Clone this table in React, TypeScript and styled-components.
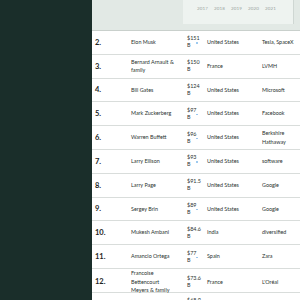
import React from 'react';
import styled, { createGlobalStyle } from 'styled-components';

const GlobalStyle = createGlobalStyle`
  html, body {
    margin: 0;
    padding: 0;
    background: #ffffff;
    overflow: hidden;
  }
  body {
    font-family: Lato, "Noto Sans", sans-serif;
    color: #1f2a27;
  }
`;

const Page = styled.div`
  display: flex;
  width: 300px;
  height: 300px;
  overflow: hidden;
`;

const Sidebar = styled.aside`
  flex: 0 0 92px;
  background-color: #1a2e2a;
`;

const Main = styled.main`
  flex: 1;
  min-width: 0;
  overflow: hidden;
`;

const HeaderBand = styled.div`
  box-sizing: border-box;
  display: flex;
  height: 31px;
  padding-left: 91px;
  background-color: #e2e9e5;
  border-bottom: 1px solid #c9d0cc;
`;

const ChartPanel = styled.div`
  box-sizing: border-box;
  display: flex;
  align-items: flex-start;
  gap: 5px;
  flex: 0 0 111px;
  height: 24px;
  padding: 6px 0 0 14px;
  background-color: #eef3f0;
  border-right: 1px solid #cfd7d3;
`;

const Year = styled.span`
  width: 12px;
  font-size: 4.5px;
  color: #9aa39f;
  letter-spacing: 0.1px;
`;

const Row = styled.div`
  box-sizing: border-box;
  display: grid;
  grid-template-columns: 39px 56px 20px 55px 46px;
  align-items: center;
  height: 23.8px;
  border-bottom: 1px solid #d9dddb;
`;

const Rank = styled.div`
  padding-left: 3px;
  font-size: 7.5px;
  font-weight: 700;
  color: #1c2522;
`;

const Cell = styled.div<{ $width?: number }>`
  position: relative;
  width: ${(p) => (p.$width ? `${p.$width}px` : 'auto')};
  font-size: 5.4px;
  line-height: 8.6px;
  color: #2a3330;
`;

const Price = styled(Cell)`
  line-height: 7px;
`;

const Dot = styled.span`
  position: absolute;
  left: 9px;
  top: 7px;
  width: 1.5px;
  height: 1.5px;
  border-radius: 50%;
  background-color: #8cc0ec;
`;

type Person = {
  rank: number;
  name: string;
  worth: string;
  country: string;
  source: string;
  dot?: boolean;
};

const people: Person[] = [
  { rank: 2, name: 'Elon Musk', worth: '$151', country: 'United States', source: 'Tesla, SpaceX', dot: true },
  { rank: 3, name: 'Bernard Arnault & family', worth: '$150', country: 'France', source: 'LVMH' },
  { rank: 4, name: 'Bill Gates', worth: '$124', country: 'United States', source: 'Microsoft' },
  { rank: 5, name: 'Mark Zuckerberg', worth: '$97', country: 'United States', source: 'Facebook', dot: true },
  { rank: 6, name: 'Warren Buffett', worth: '$96', country: 'United States', source: 'Berkshire Hathaway', dot: true },
  { rank: 7, name: 'Larry Ellison', worth: '$93', country: 'United States', source: 'software', dot: true },
  { rank: 8, name: 'Larry Page', worth: '$91.5', country: 'United States', source: 'Google' },
  { rank: 9, name: 'Sergey Brin', worth: '$89', country: 'United States', source: 'Google', dot: true },
  { rank: 10, name: 'Mukesh Ambani', worth: '$84.6', country: 'India', source: 'diversified' },
  { rank: 11, name: 'Amancio Ortega', worth: '$77', country: 'Spain', source: 'Zara', dot: true },
  { rank: 12, name: 'Francoise Bettencourt Meyers & family', worth: '$73.6', country: 'France', source: "L'Oréal" },
  { rank: 13, name: 'Zhong Shanshan', worth: '$68.9', country: 'China', source: 'beverages' },
];

const years = ['2017', '2018', '2019', '2020', '2021'];

const App: React.FC = () => {
  return (
    <>
      <GlobalStyle />
      <Page>
        <Sidebar />
        <Main>
          <HeaderBand>
            <ChartPanel>
              {years.map((y) => (
                <Year key={y}>{y}</Year>
              ))}
            </ChartPanel>
          </HeaderBand>
          {people.map((p) => (
            <Row key={p.rank}>
              <Rank>{p.rank}.</Rank>
              <Cell $width={46}>{p.name}</Cell>
              <Price $width={12}>
                {p.worth} B{p.dot && <Dot />}
              </Price>
              <Cell>{p.country}</Cell>
              <Cell $width={40}>{p.source}</Cell>
            </Row>
          ))}
        </Main>
      </Page>
    </>
  );
};

export default App;
